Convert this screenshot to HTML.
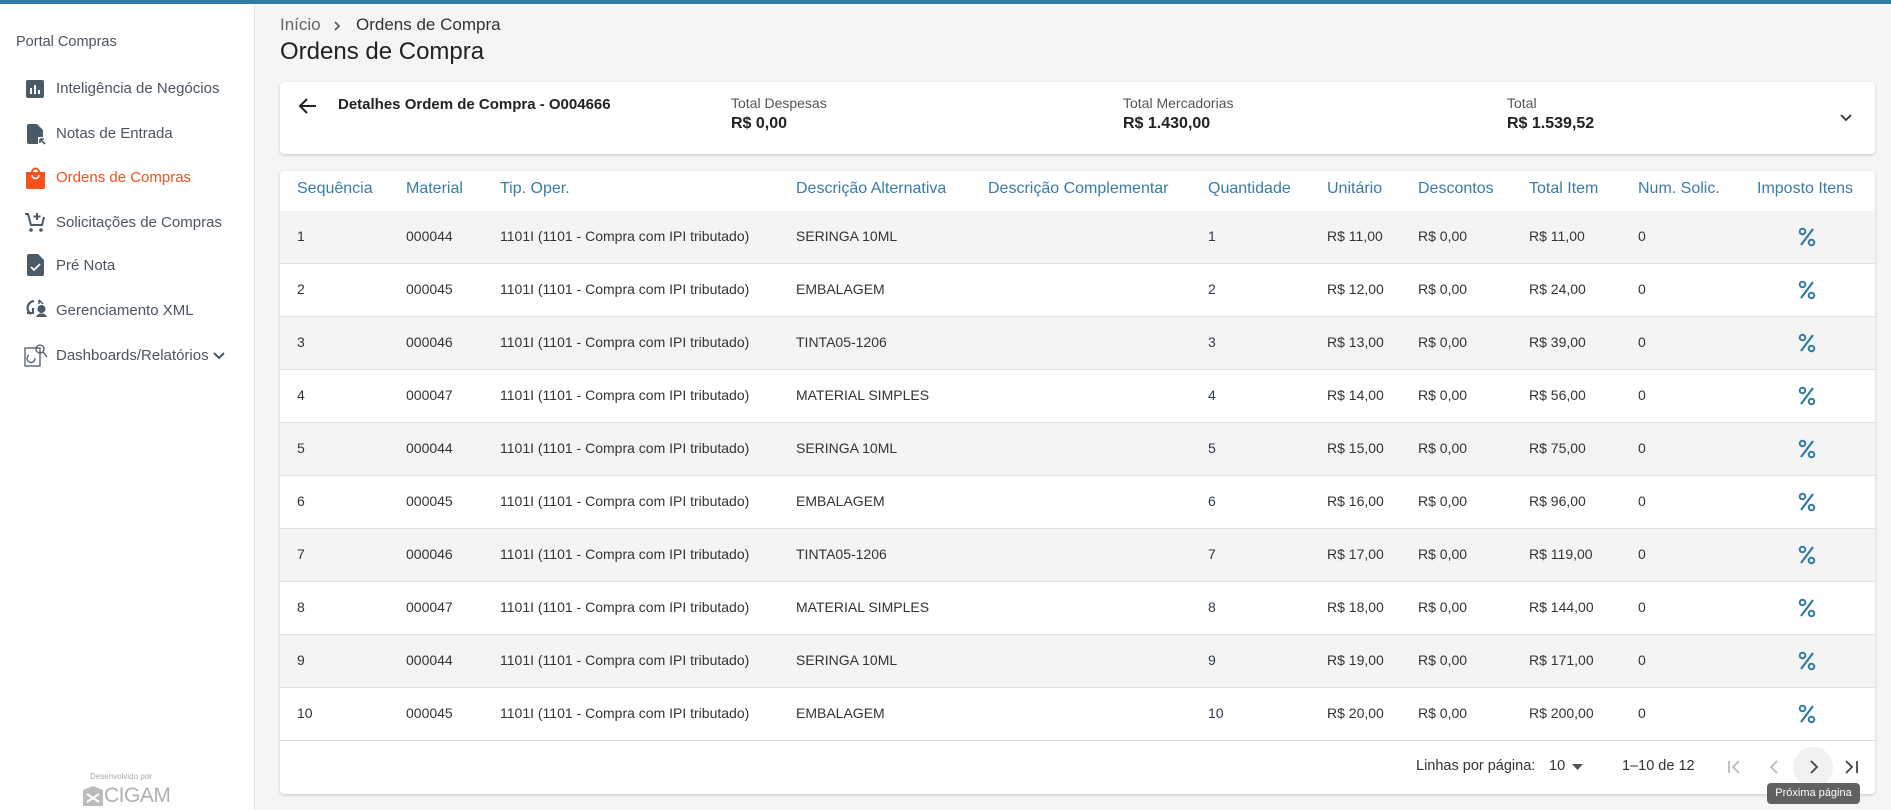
<!DOCTYPE html>
<html><head><meta charset="utf-8"><style>
*{margin:0;padding:0;box-sizing:border-box}
body{width:1891px;height:810px;overflow:hidden;background:#f4f5f7;font-family:"Liberation Sans",sans-serif;position:relative;color:#333}
.a{position:absolute;white-space:nowrap}
#top{left:0;top:0;width:1891px;height:4px;background:#2f7ba3}
#side{left:0;top:4px;width:255px;height:806px;background:#fff;border-right:1px solid #e3e5e8}
.nav{font-size:15px;color:#4a5560}
.ic{position:absolute}
.card{background:#fff;border-radius:4px;box-shadow:0 1px 3px rgba(0,0,0,.18)}
.th{font-size:16px;color:#3b7ca3;top:180px}
.row{position:absolute;left:280px;width:1595px;height:53px;border-bottom:1px solid #e0e0e0}
.row.s{background:#f4f4f4}
.c{position:absolute;top:17px;font-size:14px;color:#333;white-space:nowrap}
.q{color:#2d3a4f}
</style></head><body>
<div class="a" id="top"></div>
<div class="a" id="side"></div>
<div class="a" style="left:16px;top:34px;font-size:14.5px;color:#4a5560">Portal Compras</div>

<svg class="ic" style="left:26px;top:80px" width="19" height="19"><rect width="18" height="18" rx="2" fill="#4a5a66"/><rect x="4" y="8" width="2" height="6" fill="#fff"/><rect x="8" y="5" width="2" height="9" fill="#fff"/><rect x="12" y="10" width="2" height="4" fill="#fff"/></svg>
<div class="a nav" style="left:56px;top:80px">Inteligência de Negócios</div>
<svg class="ic" style="left:27px;top:124px" width="20" height="21"><path d="M0 2a2 2 0 0 1 2-2h8l6 6v7h-5v7H2a2 2 0 0 1-2-2z" fill="#4a5a66"/><path d="M13 15l5 5M13 15v4M13 15h4" stroke="#4a5a66" stroke-width="1.6" fill="none"/></svg>
<div class="a nav" style="left:56px;top:125px">Notas de Entrada</div>
<svg class="ic" style="left:26px;top:167px" width="19" height="22"><path d="M0 5h19v15a2 2 0 0 1-2 2H2a2 2 0 0 1-2-2z" fill="#f4511e"/><path d="M6 5a3.5 3.5 0 0 1 7 0" stroke="#f4511e" stroke-width="2" fill="none"/><path d="M6 8a3.5 3.5 0 0 0 7 0" stroke="#fff" stroke-width="1.6" fill="none"/></svg>
<div class="a nav" style="left:56px;top:169px;color:#f4511e">Ordens de Compras</div>
<svg class="ic" style="left:24px;top:211px" width="22" height="22"><path d="M1 3h3l3 11h11l2-8" stroke="#4a5a66" stroke-width="2" fill="none"/><path d="M13 2v7M9.5 5.5h7" stroke="#4a5a66" stroke-width="2"/><circle cx="7" cy="19" r="1.8" fill="#4a5a66"/><circle cx="17" cy="19" r="1.8" fill="#4a5a66"/></svg>
<div class="a nav" style="left:56px;top:214px">Solicitações de Compras</div>
<svg class="ic" style="left:27px;top:254px" width="17" height="22"><path d="M0 2a2 2 0 0 1 2-2h9l6 6v14a2 2 0 0 1-2 2H2a2 2 0 0 1-2-2z" fill="#4a5a66"/><path d="M4 13l3 3 6-6" stroke="#fff" stroke-width="1.8" fill="none"/></svg>
<div class="a nav" style="left:56px;top:257px">Pré Nota</div>
<svg class="ic" style="left:26px;top:298px" width="22" height="20"><path d="M8 3a7 7 0 0 0-3 13" stroke="#4a5a66" stroke-width="2.2" fill="none"/><path d="M1 15h6v-5" stroke="#4a5a66" stroke-width="2" fill="none"/><path d="M13 2l4 4M13 2v4" stroke="#4a5a66" stroke-width="1.5"/><path d="M10 19a6 6 0 0 1 11 0z" fill="#4a5a66"/><circle cx="15.5" cy="11" r="4" fill="#4a5a66"/></svg>
<div class="a nav" style="left:56px;top:302px">Gerenciamento XML</div>
<svg class="ic" style="left:24px;top:343px" width="24" height="24"><rect x="1" y="5" width="15" height="18" stroke="#4a5a66" stroke-width="1.3" fill="none"/><circle cx="16" cy="6" r="4" stroke="#4a5a66" stroke-width="1.3" fill="none"/><path d="M19 9l4 5M5 12a4 4 0 1 0 6 3" stroke="#4a5a66" stroke-width="1.3" fill="none"/></svg>
<div class="a nav" style="left:56px;top:347px">Dashboards/Relatórios</div>
<svg class="ic" style="left:212px;top:351px" width="14" height="10"><path d="M2 2l5 5 5-5" stroke="#4a5a66" stroke-width="2" fill="none"/></svg>

<div class="a" style="left:90px;top:772px;font-size:8px;color:#aaa">Desenvolvido por</div>
<svg class="ic" style="left:83px;top:786px" width="20" height="20"><path d="M0 4l10-4 10 4v16H0z" fill="#bbb"/><path d="M4 8l12 8M16 8L4 16" stroke="#fff" stroke-width="2"/></svg>
<div class="a" style="left:104px;top:784px;font-size:21px;color:#b0b0b0;letter-spacing:-.5px">CIGAM</div>

<div class="a" style="left:280px;top:15px;font-size:17px;color:#666">Início</div>
<svg class="ic" style="left:333px;top:20px" width="10" height="12"><path d="M2 2l4 4-4 4" stroke="#555" stroke-width="1.6" fill="none"/></svg>
<div class="a" style="left:356px;top:15px;font-size:17px;color:#333">Ordens de Compra</div>
<div class="a" style="left:280px;top:38px;font-size:24px;color:#222;font-weight:500">Ordens de Compra</div>

<div class="a card" style="left:280px;top:82px;width:1595px;height:72px"></div>
<svg class="ic" style="left:298px;top:97px" width="20" height="18"><path d="M18 9H3M9 2L2 9l7 7" stroke="#222" stroke-width="2" fill="none"/></svg>
<div class="a" style="left:338px;top:96px;font-size:15px;font-weight:bold;color:#222">Detalhes Ordem de Compra - O004666</div>
<div class="a" style="left:731px;top:95px;font-size:14px;color:#555">Total Despesas</div>
<div class="a" style="left:731px;top:115px;font-size:16px;color:#222;font-weight:bold">R$ 0,00</div>
<div class="a" style="left:1123px;top:95px;font-size:14px;color:#555">Total Mercadorias</div>
<div class="a" style="left:1123px;top:115px;font-size:16px;color:#222;font-weight:bold">R$ 1.430,00</div>
<div class="a" style="left:1507px;top:95px;font-size:14px;color:#555">Total</div>
<div class="a" style="left:1507px;top:115px;font-size:16px;color:#222;font-weight:bold">R$ 1.539,52</div>
<svg class="ic" style="left:1839px;top:113px" width="14" height="10"><path d="M2 2l5 5 5-5" stroke="#333" stroke-width="1.8" fill="none"/></svg>

<div class="a card" style="left:280px;top:171px;width:1595px;height:623px;overflow:hidden">
</div>
<div class="a th" style="left:297px">Sequência</div>
<div class="a th" style="left:406px">Material</div>
<div class="a th" style="left:500px">Tip. Oper.</div>
<div class="a th" style="left:796px">Descrição Alternativa</div>
<div class="a th" style="left:988px">Descrição Complementar</div>
<div class="a th" style="left:1208px">Quantidade</div>
<div class="a th" style="left:1327px">Unitário</div>
<div class="a th" style="left:1418px">Descontos</div>
<div class="a th" style="left:1529px">Total Item</div>
<div class="a th" style="left:1638px">Num. Solic.</div>
<div class="a th" style="left:1757px">Imposto Itens</div>

<div id="rows"></div>
<script>
var d=[["1","000044","SERINGA 10ML","11,00","11,00"],["2","000045","EMBALAGEM","12,00","24,00"],["3","000046","TINTA05-1206","13,00","39,00"],["4","000047","MATERIAL SIMPLES","14,00","56,00"],["5","000044","SERINGA 10ML","15,00","75,00"],["6","000045","EMBALAGEM","16,00","96,00"],["7","000046","TINTA05-1206","17,00","119,00"],["8","000047","MATERIAL SIMPLES","18,00","144,00"],["9","000044","SERINGA 10ML","19,00","171,00"],["10","000045","EMBALAGEM","20,00","200,00"]];
var h="";d.forEach(function(r,i){var L=function(x){return x-280};
h+='<div class="row'+(i%2==0?' s':'')+'" style="top:'+(211+53*i)+'px">'+
'<div class="c" style="left:'+L(297)+'px">'+r[0]+'</div><div class="c" style="left:'+L(406)+'px">'+r[1]+'</div>'+
'<div class="c" style="left:'+L(500)+'px">1101I (1101 - Compra com IPI tributado)</div><div class="c" style="left:'+L(796)+'px">'+r[2]+'</div>'+
'<div class="c q" style="left:'+L(1208)+'px">'+r[0]+'</div><div class="c" style="left:'+L(1327)+'px">R$ '+r[3]+'</div>'+
'<div class="c" style="left:'+L(1418)+'px">R$ 0,00</div><div class="c" style="left:'+L(1529)+'px">R$ '+r[4]+'</div>'+
'<div class="c" style="left:'+L(1638)+'px">0</div>'+
'<svg style="position:absolute;left:'+L(1798)+'px;top:16px" width="18" height="20"><circle cx="4.5" cy="4.5" r="2.8" stroke="#2f7ba3" stroke-width="2" fill="none"/><circle cx="13.5" cy="15.5" r="2.8" stroke="#2f7ba3" stroke-width="2" fill="none"/><path d="M15 2L3 18" stroke="#2f7ba3" stroke-width="2.2"/></svg></div>';});
document.getElementById("rows").innerHTML=h;
</script>

<div class="a" style="left:1416px;top:758px;font-size:14.5px;color:#333">Linhas por página:</div>
<div class="a" style="left:1549px;top:758px;font-size:14.5px;color:#333">10</div>
<svg class="ic" style="left:1572px;top:764px" width="12" height="7"><path d="M0 0h11L5.5 6z" fill="#555"/></svg>
<div class="a" style="left:1622px;top:758px;font-size:14.5px;color:#333">1–10 de 12</div>
<svg class="ic" style="left:1727px;top:759px" width="14" height="16"><path d="M2 2v12M12 2L6 8l6 6" stroke="#bbb" stroke-width="1.8" fill="none"/></svg>
<svg class="ic" style="left:1768px;top:759px" width="12" height="16"><path d="M9 2L3 8l6 6" stroke="#bbb" stroke-width="1.8" fill="none"/></svg>
<div class="a" style="left:1793px;top:747px;width:40px;height:40px;border-radius:50%;background:#f0f1f3"></div>
<svg class="ic" style="left:1808px;top:759px" width="12" height="16"><path d="M3 2l6 6-6 6" stroke="#444" stroke-width="1.8" fill="none"/></svg>
<svg class="ic" style="left:1844px;top:759px" width="16" height="16"><path d="M2 2l6 6-6 6M13 2v12" stroke="#444" stroke-width="1.8" fill="none"/></svg>
<div class="a" style="left:1767px;top:783px;width:93px;height:21px;background:#616161;border-radius:4px;color:#fff;font-size:11px;line-height:21px;text-align:center">Próxima página</div>
</body></html>
